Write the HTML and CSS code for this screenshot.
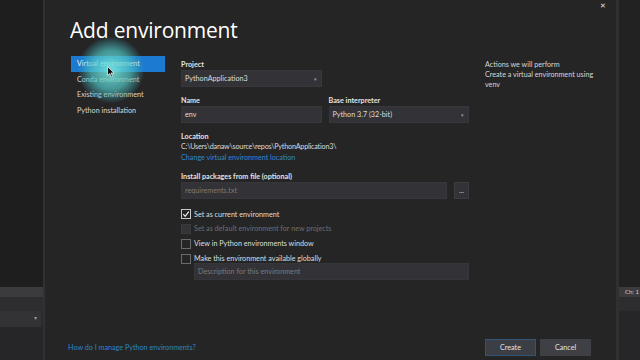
FILE: index.html
```html
<!DOCTYPE html>
<html lang="en">
  <head>
    <meta charset="UTF-8" />
    <meta name="viewport" content="width=device-width, initial-scale=1.0" />
    <title>Add environment</title>
    <link rel="stylesheet" href="styles.css">
  </head>
  <body>
    <div class="side left">
      <div class="side-top"></div>
      <div class="side-bar"></div>
      <div class="side-gap"></div>
      <div class="side-field"><span class="arrow">&#9662;</span></div>
      <div class="side-rest"></div>
    </div>

    <div class="dialog">
      <span class="close">&#10005;</span>
      <h1 class="title">Add environment</h1>

      <div class="body">
        <ul class="nav">
          <li class="on">Virtual environment</li>
          <li>Conda environment</li>
          <li>Existing environment</li>
          <li>Python installation</li>
        </ul>

        <div class="form">
          <div class="col half">
            <div class="label">Project</div>
            <div class="field select">PythonApplication3<span class="arrow">&#9662;</span></div>
          </div>

          <div class="row">
            <div class="col">
              <div class="label">Name</div>
              <div class="field">env</div>
            </div>
            <div class="col">
              <div class="label">Base interpreter</div>
              <div class="field select">Python 3.7 (32-bit)<span class="arrow">&#9662;</span></div>
            </div>
          </div>

          <div class="label gap">Location</div>
          <div class="path">C:\Users\danaw\source\repos\PythonApplication3\</div>
          <a class="link">Change virtual environment location</a>

          <div class="label gap">Install packages from file (optional)</div>
          <div class="file-row">
            <div class="field hint">requirements.txt</div>
            <div class="btn-dots">...</div>
          </div>

          <ul class="checks">
            <li><span class="box checked">
              <svg viewBox="0 0 10 10" width="10" height="10"><path d="M2.3 5.2 L4.2 7.3 L7.8 2.6" fill="none" stroke="#f0f0f0" stroke-width="1.2"/></svg>
            </span>Set as current environment</li>
            <li class="disabled"><span class="box"></span>Set as default environment for new projects</li>
            <li><span class="box"></span>View in Python environments window</li>
            <li><span class="box"></span>Make this environment available globally</li>
          </ul>
          <div class="field desc hint">Description for this environment</div>
        </div>

        <div class="actions">
          <div>Actions we will perform</div>
          <div>Create a virtual environment using venv</div>
        </div>
      </div>

      <div class="footer">
        <a class="link">How do I manage Python environments?</a>
        <div class="buttons">
          <button class="create">Create</button>
          <button>Cancel</button>
        </div>
      </div>

      <div class="glow"></div>
      <svg class="cursor" viewBox="0 0 8 12" width="8" height="12">
        <path d="M0.5 0.5 L0.5 9.5 L2.7 7.5 L4.3 11 L5.6 10.4 L4.1 7 L7 7 Z" fill="#111" stroke="#e8e8e8" stroke-width="0.8"/>
      </svg>
    </div>

    <div class="side right">
      <div class="side-top"></div>
      <div class="side-bar">Ch: 1</div>
      <div class="side-gap"></div>
      <div class="side-rest"></div>
    </div>
  </body>
</html>
```

FILE: styles.css
```css
* {
  margin: 0;
  padding: 0;
  box-sizing: border-box;
}
ul {
  list-style: none;
}
body {
  width: 640px;
  height: 360px;
  overflow: hidden;
  display: flex;
  background: #1e1e1e;
  font-family: Lato, "Open Sans", sans-serif;
  font-size: 7.2px;
  color: #d8d8d8;
}
.side {
  display: flex;
  flex-direction: column;
  flex: none;
  background: #1e1e1e;
}
.side.left {
  width: 43px;
}
.side.right {
  width: 24px;
  border-left: 3px solid #303032;
}
.side .side-top {
  height: 287px;
  background: #1e1e1e;
}
.side.right .side-top {
  background: #222223;
}
.side .side-bar {
  height: 10px;
  background: #3b3b3e;
  color: #d0d0d0;
  font-size: 6px;
  line-height: 10px;
  padding-left: 6px;
  white-space: nowrap;
  overflow: hidden;
}
.side .side-gap {
  height: 14px;
  background: #2d2d30;
}
.side .side-field {
  position: relative;
  height: 16px;
  background: #333336;
  border-right: 2px solid #2a2a2c;
}
.side .side-field .arrow {
  position: absolute;
  right: 4px;
  top: 3px;
  font-size: 6px;
  color: #999;
}
.side .side-rest {
  flex: 1;
  background: #262628;
}

.dialog {
  position: relative;
  width: 573px;
  flex: none;
  display: flex;
  flex-direction: column;
  background: #252526;
  border-left: 2px solid #313133;
  padding: 0 25px 4px 26px;
}
.close {
  position: absolute;
  right: 10px;
  top: 1px;
  font-size: 7px;
  color: #e0e0e0;
}
.title {
  font-family: "Open Sans", sans-serif;
  font-weight: 400;
  font-size: 21px;
  line-height: 28px;
  color: #ffffff;
  margin-top: 16px;
  margin-left: -1px;
  letter-spacing: -0.2px;
}
.body {
  display: flex;
  margin-top: 12px;
  flex: 1;
}
.nav {
  width: 94px;
  flex: none;
}
.nav li {
  height: 15.6px;
  line-height: 15.6px;
  padding-left: 6px;
  color: #d8d8d8;
}
.nav li.on {
  background: #1c7bd1;
  color: #ffffff;
}

.form {
  width: 288px;
  flex: none;
  margin-left: 16px;
  padding-top: 4px;
}
.col.half {
  width: 141px;
}
.label {
  height: 9px;
  line-height: 9px;
  margin-bottom: 1px;
  font-weight: 700;
  color: #e2e2e2;
}
.label.gap {
  margin-top: 9px;
}
.field {
  position: relative;
  height: 17px;
  line-height: 16px;
  padding-left: 3px;
  background: #333337;
  border: 1px solid #37373b;
  color: #dcdcdc;
}
.field .arrow {
  position: absolute;
  right: 4px;
  top: 0;
  font-size: 5px;
  color: #9a9a9a;
}
.field.hint {
  color: #7a7a7a;
}
.row {
  display: flex;
  gap: 7px;
  margin-top: 9px;
}
.row .col {
  flex: 1;
}
.path {
  line-height: 10px;
  letter-spacing: -0.2px;
  color: #dadada;
}
.link {
  display: block;
  margin-top: 1px;
  line-height: 10px;
  color: #2f87d0;
}
.file-row {
  display: flex;
  gap: 7px;
}
.file-row .field {
  flex: 1;
}
.btn-dots {
  width: 15px;
  height: 17px;
  line-height: 15px;
  text-align: center;
  background: #333337;
  border: 1px solid #3c3c40;
  color: #cfcfcf;
}
.checks {
  margin-top: 10px;
  display: flex;
  flex-direction: column;
  gap: 4.9px;
}
.checks li {
  display: flex;
  align-items: center;
  height: 10px;
  color: #dedede;
}
.box {
  width: 10px;
  height: 10px;
  margin-right: 3px;
  border: 1px solid #6a6a6e;
  display: flex;
  align-items: center;
  justify-content: center;
}
.box.checked {
  border-color: #c8c8c8;
}
.box svg {
  flex: none;
}
.checks li.disabled {
  color: #6e6e6e;
}
.checks li.disabled .box {
  border-color: #3a3a3c;
  background: #343436;
}
.field.desc {
  margin-top: -0.5px;
  margin-left: 13px;
  height: 17px;
}

.actions {
  width: 118px;
  flex: none;
  margin-left: 16px;
  padding-top: 4px;
  line-height: 10px;
  color: #d6d6d6;
}

.footer {
  display: flex;
  align-items: center;
  justify-content: space-between;
  margin-left: -3px;
}
.footer .link {
  margin-top: 0;
  color: #2b84cc;
}
.buttons {
  display: flex;
  gap: 4px;
}
.buttons button {
  width: 51px;
  height: 17px;
  font-family: inherit;
  font-size: 7.2px;
  color: #e4e4e4;
  background: #3f3f46;
  border: 1px solid #3f3f46;
}
.buttons button.create {
  background: #3b3e45;
  border-color: #2f5677;
}

.glow {
  position: absolute;
  left: 33px;
  top: 37px;
  width: 66px;
  height: 66px;
  border-radius: 50%;
  background: radial-gradient(circle, rgba(120, 230, 220, 0.9) 0%, rgba(80, 195, 195, 0.7) 42%, rgba(60, 160, 170, 0.3) 62%, rgba(60, 160, 170, 0) 72%);
}
.cursor {
  position: absolute;
  left: 62px;
  top: 66px;
}
```
